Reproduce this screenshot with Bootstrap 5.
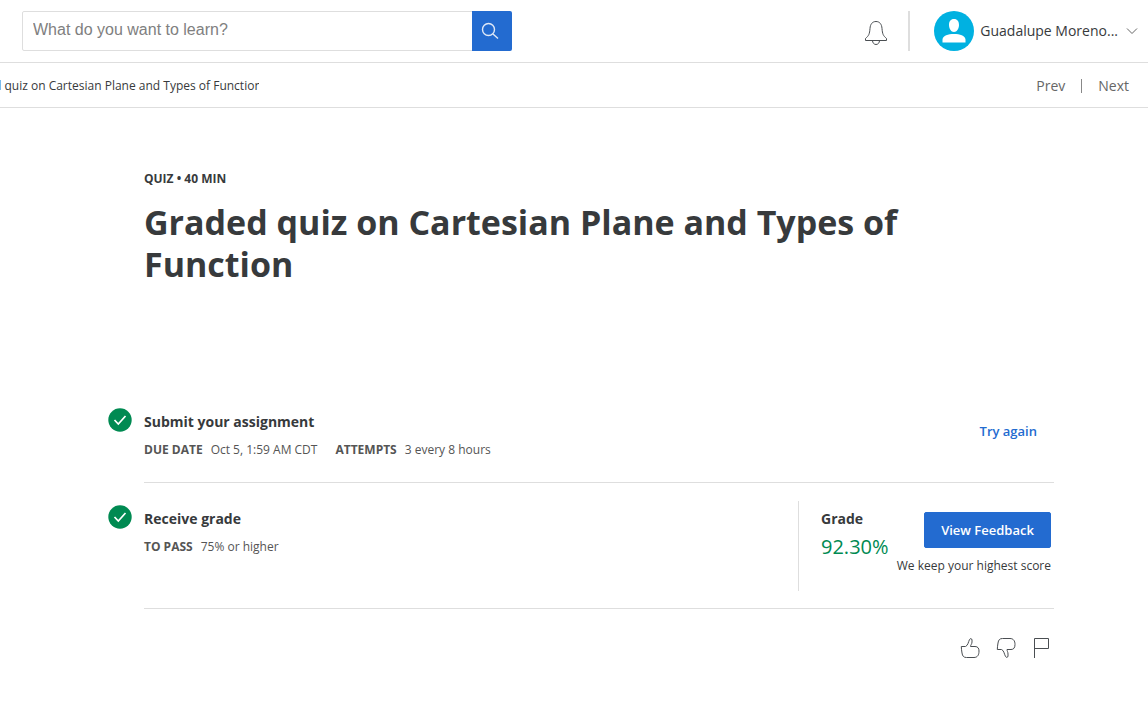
<!DOCTYPE html>
<html lang="en">
<head>
<meta charset="utf-8">
<meta name="viewport" content="width=device-width, initial-scale=1">
<title>Graded quiz on Cartesian Plane and Types of Function</title>
<link href="https://cdn.jsdelivr.net/npm/bootstrap@5.3.0/dist/css/bootstrap.min.css" rel="stylesheet">
<style>
  body { font-family: "Open Sans", sans-serif; font-size: 14px; line-height: 20px; color: #373a3c; background: #fff; }
  a { text-decoration: none; }
  svg { display: block; flex: none; }
  .line-icon { fill: none; stroke: #4a4e52; stroke-width: 1; }
  .topbar { height: 63px; padding: 0 10px 0 22px; border-bottom: 1px solid #dedede; }
  .search { width: 490px; height: 40px; }
  .search .form-control { height: 40px; padding: 6px 10px 8px; border: 1px solid #dedede; border-radius: 2px 0 0 2px; font: 16px/24px "Liberation Sans", sans-serif; }
  .search .form-control::placeholder { color: #808080; }
  .search .btn { width: 40px; padding: 0 0 0 9px; border: 0; border-radius: 0 2px 2px 0; }
  .btn-primary { --bs-btn-bg: #236bd0; --bs-btn-border-color: #236bd0; }
  .plain-btn { background: none; border: 0; padding: 0; color: inherit; }
  .bell { padding-top: 3px; }
  .account { height: 40px; margin-left: 20px; padding-left: 24px; border-left: 2px solid #dedede; }
  .account-btn { gap: 6px; }
  .account-arrow { margin-left: 2px; }
  .subbar { height: 45px; padding: 2px 19px 0 0; border-bottom: 1px solid #dedede; }
  .crumb { width: 259px; font-size: 12px; overflow: hidden; white-space: nowrap; text-indent: -6px; }
  .subbar a { color: #666; }
  .pipe { width: 1px; height: 14px; background: #888; }
  .page { padding: 61px 94px 24px 108px; }
  .page-head { padding-left: 36px; margin-bottom: 119px; }
  .kicker { font-size: 12px; font-weight: 700; margin-bottom: 12px; }
  h1 { font-size: 34px; line-height: 42px; font-weight: 700; margin: 0; }
  h2 { font-size: 14px; line-height: 20px; font-weight: 700; margin: 0; }
  .step { gap: 12px; }
  .step-body { border-bottom: 1px solid #dedede; }
  .step-one { height: 79px; padding-top: 8px; }
  .step-two { height: 126px; }
  .step-two-text { padding-top: 26px; }
  .step-icon { margin-top: 4px; }
  .step-two-icon { margin-top: 22px; }
  .meta { font-size: 12px; color: #555; margin-top: 8px; }
  .meta strong { margin-right: 8px; }
  .meta span + strong { margin-left: 18px; }
  .again { color: #236bd0; font-size: 13px; font-weight: 600; margin: 9px 17px 0 0; }
  .grade { width: 256px; height: 90px; margin-top: 18px; padding: 8px 3px 0 22px; border-left: 1px solid #dedede; }
  .score { font-size: 20px; line-height: 28px; color: #008a52; margin-top: 4px; }
  .feedback { width: 127px; height: 36px; margin-top: 3px; padding: 2px 0 0; border-radius: 2px; font-size: 13px; font-weight: 600; }
  .note { font-size: 12px; margin-top: 8px; }
  .reactions { gap: 16px; padding: 28px 4px 0; }
</style>
</head>
<body>
<header class="topbar d-flex align-items-center">
  <form class="search input-group flex-nowrap">
    <input class="form-control" type="text" aria-label="Search" placeholder="What do you want to learn?">
    <button class="btn btn-primary" type="button" aria-label="Submit search">
      <svg width="18" height="18" viewBox="0 0 18 18" fill="none" stroke="#e0e9f7" stroke-width="1.4"><circle cx="7.5" cy="7.5" r="6"/><path d="M12 12l5 4.500"/></svg>
    </button>
  </form>
  <button class="plain-btn bell ms-auto" type="button" aria-label="Notifications">
    <svg class="line-icon" width="24" height="26" viewBox="0 0 24 26"><path d="M1.500 20.500V18.500C5 15.500 5.500 14 6 8.500C6.300 4 8.500 1.500 12 1.500S17.700 4 18 8.500C18.500 14 19 15.500 22.500 18.500V20.500ZM8.500 20.500C8.500 22.800 10 24.500 12 24.500S15.500 22.800 15.500 20.500"/></svg>
  </button>
  <div class="account d-flex align-items-center">
    <button class="plain-btn account-btn d-flex align-items-center" type="button">
      <svg width="40" height="40" viewBox="0 0 40 40"><circle cx="20" cy="20" r="20" fill="#00b1e1"/><path fill="#fff" d="M20 8c3.400 0 5 2.500 5 6s-2 7-5 7-5-3.500-5-7 1.600-6 5-6ZM8.500 31.500V28.500C9 24.500 14 23 20 23S31 24.500 31.500 28.500V31.500Z"/></svg>
      <span>Guadalupe Moreno...</span>
      <svg class="account-arrow" width="12" height="8" viewBox="0 0 12 8" fill="none" stroke="#666"><path d="M1 1.500l5 5 5-5"/></svg>
    </button>
  </div>
</header>
<nav class="subbar d-flex align-items-center" aria-label="Lesson">
  <div class="crumb">d quiz on Cartesian Plane and Types of Function</div>
  <div class="ms-auto d-flex align-items-center gap-3"><a href="#">Prev</a><span class="pipe"></span><a href="#">Next</a></div>
</nav>
<main class="page">
  <div class="page-head">
    <div class="kicker">QUIZ • 40 MIN</div>
    <h1>Graded quiz on Cartesian Plane and Types of Function</h1>
  </div>
  <section class="step d-flex">
    <svg class="step-icon" width="24" height="24" viewBox="0 0 24 24"><circle cx="12" cy="12" r="11.700" fill="#008a52"/><path d="M6.500 12l3.800 4 7.200-8" fill="none" stroke="#fff" stroke-width="1.700"/></svg>
    <div class="step-body step-one d-flex justify-content-between flex-grow-1">
      <div><h2>Submit your assignment</h2>
        <div class="meta"><strong>DUE DATE</strong><span>Oct 5, 1:59 AM CDT</span><strong>ATTEMPTS</strong><span>3 every 8 hours</span></div></div>
      <a class="again" href="#">Try again</a>
    </div>
  </section>
  <section class="step d-flex">
    <svg class="step-two-icon" width="24" height="24" viewBox="0 0 24 24"><circle cx="12" cy="12" r="11.700" fill="#008a52"/><path d="M6.500 12l3.800 4 7.200-8" fill="none" stroke="#fff" stroke-width="1.700"/></svg>
    <div class="step-body step-two d-flex justify-content-between flex-grow-1">
      <div class="step-two-text"><h2>Receive grade</h2><div class="meta"><strong>TO PASS</strong><span>75% or higher</span></div></div>
      <div class="grade d-flex justify-content-between">
        <div><h2>Grade</h2><div class="score">92.30%</div></div>
        <div class="d-flex flex-column align-items-end text-nowrap"><button class="feedback btn btn-primary" type="button">View Feedback</button><div class="note">We keep your highest score</div></div>
      </div>
    </div>
  </section>
  <div class="reactions d-flex justify-content-end">
    <button class="plain-btn" type="button" aria-label="Like"><svg class="line-icon" width="20" height="22" viewBox="0 0 20 22"><path d="M1.300 9.500H5.500C8 8.500 8.300 5 9.500 2.500C10 1.300 12 1.300 12 3V5C12 7 10.500 8 10.500 9.500H15C18 9.500 19 11.500 19 14C19 18 17.500 20.500 14 20.500H6.500C3.500 20.500 2.500 19 2 16C1.700 13.500 1.300 12 1.300 9.500Z"/></svg></button>
    <button class="plain-btn" type="button" aria-label="Dislike"><svg class="line-icon" width="20" height="22" viewBox="0 0 20 22"><path d="M1.300 12.500C1.300 10 1.700 8.500 2 6C2.500 3 3.500 1.500 6.500 1.500H14C17.500 1.500 19 4 19 7.500C19 11 17.500 12.500 15 12.500H11C11 14 12 15 12 17V19C12 20.700 10 20.700 9.500 19.500C8 16.500 8 13.500 5.500 12.500Z"/></svg></button>
    <button class="plain-btn" type="button" aria-label="Report"><svg class="line-icon" width="18" height="22" viewBox="0 0 18 22"><path d="M2.500 21V1.500H16.500V11.500H2.500"/></svg></button>
  </div>
</main>
<script src="https://cdn.jsdelivr.net/npm/bootstrap@5.3.0/dist/js/bootstrap.bundle.min.js"></script>
</body>
</html>
